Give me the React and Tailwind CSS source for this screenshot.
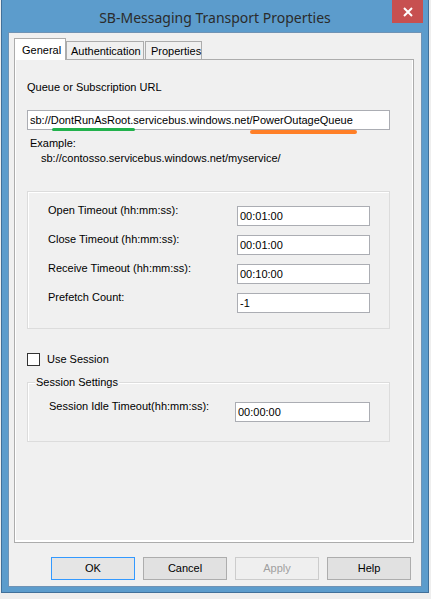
import React from 'react';

const font = { fontFamily: '"Liberation Sans", Arial, sans-serif' };

const TextBox = ({ value, className = '' }) => (
  <div
    className={`h-[20px] border border-[#abadb3] bg-white pl-[2px] text-[11px] leading-[18px] text-black ${className}`}
  >
    {value}
  </div>
);

const Button = ({ children, isDefault, disabled }) => (
  <button
    disabled={disabled}
    className={`w-[84px] h-[23px] border text-[11px] leading-[21px] ${
      isDefault
        ? 'border-[#3399ff] bg-[#e5e5e5] text-black'
        : disabled
          ? 'border-[#cccccc] bg-[#efefef] text-[#a0a0a0]'
          : 'border-[#adadad] bg-[#e1e1e1] text-black'
    }`}
  >
    {children}
  </button>
);

const timeouts = [
  { label: 'Open Timeout (hh:mm:ss):', value: '00:01:00' },
  { label: 'Close Timeout (hh:mm:ss):', value: '00:01:00' },
  { label: 'Receive Timeout (hh:mm:ss):', value: '00:10:00' },
  { label: 'Prefetch Count:', value: '-1' },
];

export default function App() {
  return (
    <div className="w-[431px] h-[599px] bg-[#eeeeee] pl-[1px] overflow-hidden" style={font}>
      {/* window frame */}
      <div className="w-[428px] h-[593px] bg-[#5c9ccc] border-x border-b border-[#41709a] flex flex-col">
        {/* title bar */}
        <div className="relative h-[32px] flex items-center justify-center">
          <span
            className="text-[14px] text-[#2b2b2b] pt-[3px]"
            style={{ fontFamily: '"Noto Sans", "Open Sans", sans-serif' }}
          >
            SB-Messaging Transport Properties
          </span>
          <div className="absolute right-[5px] top-0 w-[31px] h-[23px] bg-[#c75050] flex items-center justify-center">
            <svg width="10" height="10" viewBox="0 0 10 10">
              <path d="M1 1 L9 9 M9 1 L1 9" stroke="#fff" strokeWidth="2" />
            </svg>
          </div>
        </div>

        {/* client area */}
        <div className="mx-[6px] h-[555px] border border-[#6f93b5] bg-[#f0f0f0] flex flex-col">
          <div className="pl-[5px] pt-[5px]">
            {/* tabs */}
            <div className="flex items-end h-[22px] relative z-10 -mb-[1px] text-[11px] text-black">
              <div className="w-[52px] h-[22px] bg-white border-x border-t border-[#acacac] pl-[7px] pt-[3px]">
                General
              </div>
              <div className="w-[78px] h-[19px] bg-[#f0f0f0] border border-[#acacac] pl-[4px] pt-[4px] leading-[11px]">
                Authentication
              </div>
              <div className="w-[57px] h-[19px] ml-[1px] bg-[#f0f0f0] border border-[#acacac] pl-[5px] pt-[4px] leading-[11px]">
                Properties
              </div>
            </div>

            {/* tab panel */}
            <div className="w-[400px] h-[484px] border border-[#acacac] bg-[#f0f0f0] shadow-[inset_1px_0_0_#fff,inset_-1px_-2px_0_#fff] pl-[12px] text-[11px] text-black">
              <div className="mt-[21px] h-[13px] leading-[13px]">Queue or Subscription URL</div>

              <div className="relative mt-[16px] w-[363px]">
                <TextBox value="sb://DontRunAsRoot.servicebus.windows.net/PowerOutageQueue" className="w-[363px]" />
                {/* highlight marks */}
                <div className="absolute left-[25px] top-[18px] w-[83px] h-[3px] rounded-full bg-[#22b14c]" />
                <div className="absolute left-[223px] top-[20px] w-[107px] h-[4px] rounded-full bg-[#ff7f27]" />
              </div>

              <div className="mt-[6px] leading-[15px]">
                <div className="pl-[3px]">Example:</div>
                <div className="pl-[14px]">sb://contosso.servicebus.windows.net/myservice/</div>
              </div>

              {/* timeouts group */}
              <div className="mt-[25px] w-[363px] h-[138px] border border-[#dcdcdc] shadow-[inset_1px_1px_0_#fff] pt-[12px] pl-[20px]">
                {timeouts.map((t) => (
                  <div key={t.label} className="flex items-start h-[29px]">
                    <div className="w-[189px] leading-[13px]">{t.label}</div>
                    <TextBox value={t.value} className="mt-[2px] w-[133px]" />
                  </div>
                ))}
              </div>

              <div className="mt-[24px] flex items-center h-[13px]">
                <div className="w-[13px] h-[13px] border border-[#333333] bg-white" />
                <span className="ml-[7px] leading-[13px]">Use Session</span>
              </div>

              {/* session settings group */}
              <div className="relative mt-[16px] w-[363px] h-[60px] border border-[#dcdcdc] shadow-[inset_1px_1px_0_#fff] pt-[17px] pl-[21px]">
                <span className="absolute left-[7px] -top-[7px] px-[1px] bg-[#f0f0f0] leading-[13px]">
                  Session Settings
                </span>
                <div className="flex items-start">
                  <div className="w-[186px] leading-[13px]">Session Idle Timeout(hh:mm:ss):</div>
                  <TextBox value="00:00:00" className="mt-[2px] w-[135px]" />
                </div>
              </div>
            </div>
          </div>

          {/* buttons */}
          <div className="mt-[14px] pl-[42px] flex gap-[8px]" style={font}>
            <Button isDefault>OK</Button>
            <Button>Cancel</Button>
            <Button disabled>Apply</Button>
            <Button>Help</Button>
          </div>
        </div>
      </div>
    </div>
  );
}
